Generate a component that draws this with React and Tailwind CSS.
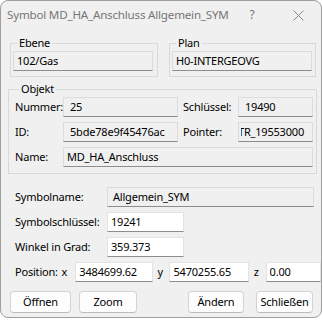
import React from 'react';

const ReadOnly = ({ className = '', children }) => (
  <div
    className={`h-[20px] flex items-center bg-[#f0f0f0] border border-[#dcdcdc] border-b-[#8d8d8d] overflow-hidden whitespace-nowrap ${className}`}
  >
    {children}
  </div>
);

const Edit = ({ className = '', children }) => (
  <div
    className={`h-[20px] flex items-center bg-white border border-[#e3e3e3] border-b-[#8d8d8d] overflow-hidden whitespace-nowrap ${className}`}
  >
    {children}
  </div>
);

const Btn = ({ className = '', children }) => (
  <button
    className={`h-[22px] rounded-[4px] bg-[#fdfdfd] border border-[#d3d3d3] border-b-[#bcbcbc] text-black ${className}`}
  >
    {children}
  </button>
);

const Group = ({ label, className = '', children }) => (
  <fieldset className={`border border-[#d9d9d9] ${className}`}>
    <legend className="ml-[4px] px-[2px] leading-[16px]">{label}</legend>
    {children}
  </fieldset>
);

const App = () => {
  return (
    <div className="w-[323px] h-[320px] bg-white">
      <div className="w-[322px] h-[318px] rounded-[8px] border border-[#9e9e9e] bg-[#f0f0f0] flex flex-col overflow-hidden font-['Noto_Sans',sans-serif] text-[11px] tracking-[-0.2px] text-black">
        {/* Title bar */}
        <div className="h-[28px] flex items-center text-[#767676]">
          <span className="flex-1 min-w-0 pl-[6px] text-[11.6px] whitespace-nowrap">
            Symbol MD_HA_Anschluss Allgemein_SYM
          </span>
          <div className="w-[46px] shrink-0 h-full flex items-center justify-center text-[12px]">?</div>
          <div className="w-[46px] shrink-0 h-full flex items-center justify-center">
            <svg width="11" height="11" viewBox="0 0 11 11">
              <path d="M0.5 0.5 L10.5 10.5 M10.5 0.5 L0.5 10.5" stroke="#8a8a8a" strokeWidth="1" />
            </svg>
          </div>
        </div>

        {/* Ebene / Plan */}
        <div className="flex mt-[6px] ml-[9px]">
          <Group label="Ebene" className="w-[148px] px-[2px] pb-[5px]">
            <ReadOnly className="w-[140px] pl-[3px]">102/Gas</ReadOnly>
          </Group>
          <Group label="Plan" className="w-[147px] ml-[11px] px-[2px] pb-[5px]">
            <ReadOnly className="w-[140px] pl-[3px]">H0-INTERGEOVG</ReadOnly>
          </Group>
        </div>

        {/* Objekt */}
        <Group label="Objekt" className="w-[309px] ml-[7px] mt-[4px] pl-[6px] pb-[6px]">
          <div className="flex flex-col gap-[5px]">
            <div className="flex items-center">
              <span className="w-[48px]">Nummer:</span>
              <ReadOnly className="w-[115px] pl-[6px]">25</ReadOnly>
              <span className="w-[55px] ml-[5px]">Schlüssel:</span>
              <ReadOnly className="w-[75px] pl-[6px]">19490</ReadOnly>
            </div>
            <div className="flex items-center">
              <span className="w-[48px]">ID:</span>
              <ReadOnly className="w-[115px] pl-[6px]">5bde78e9f45476ac</ReadOnly>
              <span className="w-[55px] ml-[5px]">Pointer:</span>
              {/* scrolled edit: first letter is half hidden, as in the dialog */}
              <ReadOnly className="w-[75px]">
                <div className="ml-[2px] flex-1 overflow-hidden">
                  <span className="block ml-[-3px]">TR_19553000</span>
                </div>
              </ReadOnly>
            </div>
            <div className="flex items-center">
              <span className="w-[48px]">Name:</span>
              <ReadOnly className="w-[250px] pl-[3px]">MD_HA_Anschluss</ReadOnly>
            </div>
          </div>
        </Group>

        {/* Symbol */}
        <div className="flex flex-col gap-[5px] mt-[13px] pl-[14px]">
          <div className="flex items-center">
            <span className="w-[92px]">Symbolname:</span>
            <ReadOnly className="w-[207px] pl-[5px]">Allgemein_SYM</ReadOnly>
          </div>
          <div className="flex items-center">
            <span className="w-[92px]">Symbolschlüssel:</span>
            <Edit className="w-[77px] pl-[3px]">19241</Edit>
          </div>
          <div className="flex items-center">
            <span className="w-[92px]">Winkel in Grad:</span>
            <Edit className="w-[77px] pl-[3px]">359.373</Edit>
          </div>
          <div className="flex items-center">
            <span className="w-[47px]">Position:</span>
            <span className="w-[14px]">x</span>
            <Edit className="w-[78px] pl-[3px]">3484699.62</Edit>
            <span className="w-[12px] ml-[5px]">y</span>
            <Edit className="w-[80px] pl-[3px]">5470255.65</Edit>
            <span className="w-[12px] ml-[5px]">z</span>
            <Edit className="w-[56px] pl-[3px]">0.00</Edit>
          </div>
        </div>

        {/* Buttons */}
        <div className="flex mt-[9px] ml-[9px]">
          <Btn className="w-[61px]">Öffnen</Btn>
          <Btn className="w-[58px] ml-[8px]">Zoom</Btn>
          <Btn className="w-[56px] ml-[51px]">Ändern</Btn>
          <Btn className="w-[57px] ml-[12px]">Schließen</Btn>
        </div>
      </div>
    </div>
  );
};

export default App;
